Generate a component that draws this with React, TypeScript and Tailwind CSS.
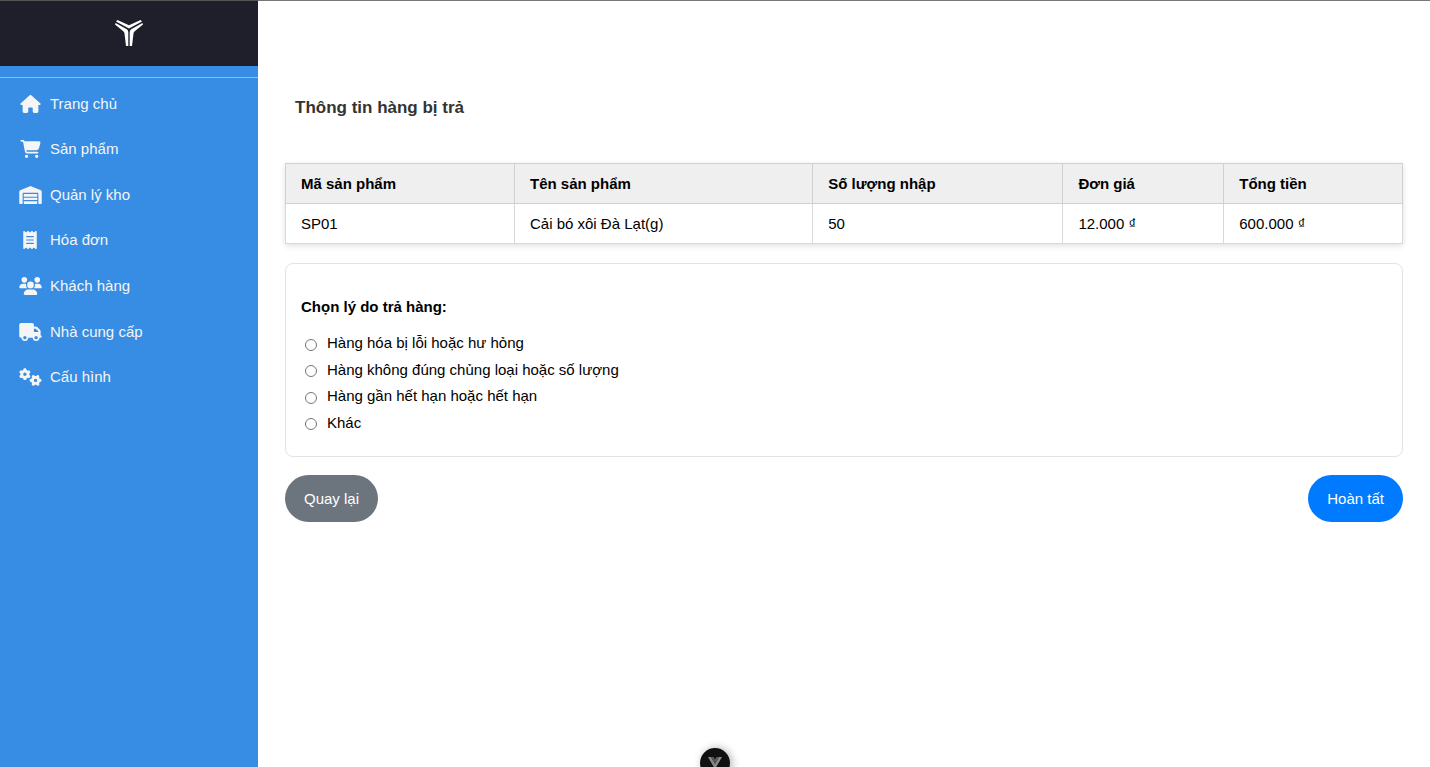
import {
  FaCartShopping,
  FaGears,
  FaHouse,
  FaReceipt,
  FaTruck,
  FaUsers,
  FaWarehouse,
} from "react-icons/fa6";

const navItems = [
  { label: "Trang chủ", Icon: FaHouse, size: "h-[18px] w-[21px]" },
  { label: "Sản phẩm", Icon: FaCartShopping, size: "h-[18px] w-[21px]" },
  { label: "Quản lý kho", Icon: FaWarehouse, size: "h-[18px] w-[23px]" },
  { label: "Hóa đơn", Icon: FaReceipt, size: "h-[18px] w-[18px]" },
  { label: "Khách hàng", Icon: FaUsers, size: "h-[18px] w-[23px]" },
  { label: "Nhà cung cấp", Icon: FaTruck, size: "h-[18px] w-[23px]" },
  { label: "Cấu hình", Icon: FaGears, size: "h-[18px] w-[23px]" },
];

const columns = [
  { label: "Mã sản phẩm", width: "w-[20.5%]" },
  { label: "Tên sản phẩm", width: "w-[26.7%]" },
  { label: "Số lượng nhập", width: "w-[22.4%]" },
  { label: "Đơn giá", width: "w-[14.4%]" },
  { label: "Tổng tiền", width: "w-[16%]" },
];

const rows = [["SP01", "Cải bó xôi Đà Lạt(g)", "50", "12.000 ₫", "600.000 ₫"]];

const reasons = [
  "Hàng hóa bị lỗi hoặc hư hỏng",
  "Hàng không đúng chủng loại hoặc số lượng",
  "Hàng gần hết hạn hoặc hết hạn",
  "Khác",
];

function Logo() {
  return (
    <svg viewBox="0 0 28 28" className="h-7 w-7" fill="#fff" aria-hidden="true">
      <path d="M2.400 0 14 5.200 25.600 0 27 1.600 14 8.400 1 1.600Z" />
      <path d="M.6 3 11.800 9.300Q13.300 10.300 13.300 12.200V26H11L9.500 13.600Q9.300 12.200 8.300 11.300L0 4.600Z" />
      <path d="M27.400 3 16.200 9.300Q14.700 10.300 14.700 12.200V26H17L18.500 13.600Q18.700 12.200 19.700 11.300L28 4.600Z" />
    </svg>
  );
}

function Sidebar() {
  return (
    <aside className="w-[258px] shrink-0 bg-[#378ce4]">
      <div className="flex h-[66px] items-center justify-center border-t border-[#555] bg-[#1f1f2c]">
        <Logo />
      </div>
      <hr className="mt-[11px] border-t border-[#8fbdef]" />
      <nav className="mt-[3px] grid h-[319px] grid-rows-7">
        {navItems.map(({ label, Icon, size }) => (
          <a key={label} href="#" className="flex items-center gap-2 pl-[18px] text-[#f5f5f5]">
            <span className="flex w-6 justify-center">
              <Icon className={size} />
            </span>
            {label}
          </a>
        ))}
      </nav>
    </aside>
  );
}

export default function App() {
  return (
    <div className="flex min-h-screen bg-white font-['Liberation_Sans',Arial,sans-serif] text-[15px] leading-5 text-black">
      <Sidebar />
      <main className="min-w-0 flex-1 border-t border-[#777] px-[27px]">
        <h1 className="mt-[95px] pl-[10px] text-[17px] leading-6 font-bold text-[#333]">
          Thông tin hàng bị trả
        </h1>

        <table className="mt-[43px] w-full table-fixed border-collapse text-left shadow-[0_2px_6px_rgba(0,0,0,0.12)]">
          <thead className="bg-[#efefef]">
            <tr>
              {columns.map(({ label, width }) => (
                <th key={label} className={`${width} h-10 border border-[#d0d0d0] px-[15px] font-bold`}>
                  {label}
                </th>
              ))}
            </tr>
          </thead>
          <tbody>
            {rows.map((row) => (
              <tr key={row[0]}>
                {row.map((cell, i) => (
                  <td key={i} className="h-10 border border-[#d8d8d8] px-[15px]">
                    {cell}
                  </td>
                ))}
              </tr>
            ))}
          </tbody>
        </table>

        <fieldset className="mt-[19px] rounded-lg border border-[#e2e2e2] px-[15px] pt-[33px] pb-5">
          <legend className="float-left mb-[13px] w-full font-bold">Chọn lý do trả hàng:</legend>
          <div className="clear-both grid h-[106px] grid-rows-4">
            {reasons.map((reason) => (
              <label key={reason} className="flex items-center gap-[10px] pl-1">
                <input
                  type="radio"
                  name="reason"
                  value={reason}
                  className="mt-[3px] size-3 appearance-none rounded-full border border-[#767676] bg-white checked:border-4 checked:border-[#007bff]"
                />
                {reason}
              </label>
            ))}
          </div>
        </fieldset>

        <div className="mt-[18px] flex justify-between text-white">
          <button type="button" className="h-[47px] rounded-full bg-[#6c757d] px-[19px]">
            Quay lại
          </button>
          <button type="button" className="h-[47px] rounded-full bg-[#007bff] px-[19px]">
            Hoàn tất
          </button>
        </div>
      </main>

      <button
        type="button"
        aria-label="Vue DevTools"
        className="fixed -bottom-[11px] left-1/2 flex size-[30px] -translate-x-1/2 items-center justify-center rounded-full bg-[#111] shadow-[2px_0_8px_rgba(0,0,0,0.3)]"
      >
        <svg viewBox="0 0 14 12" className="h-3 w-[14px]" aria-hidden="true">
          <path d="M0 0h3l4 7 4-7h3L7 12Z" fill="#8a8a8a" />
          <path d="M3 0h2.500L7 2.600 8.500 0H11L7 7Z" fill="#5a5a5a" />
        </svg>
      </button>
    </div>
  );
}
